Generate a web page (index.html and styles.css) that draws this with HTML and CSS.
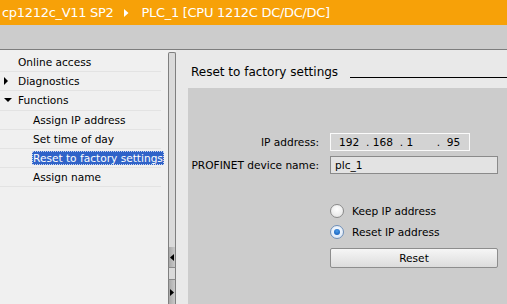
FILE: index.html
```html
<!DOCTYPE html>
<html>
<head>
<meta charset="utf-8">
<link rel="stylesheet" href="styles.css">
</head>
<body>
<div class="header">
  <span class="h1">cp1212c_V11 SP2</span>
  <svg class="crumb" width="5" height="8" viewBox="0 0 5 8"><path d="M0 0 L4.5 4 L0 8 Z" fill="#fff"/></svg>
  <span class="h2">PLC_1 [CPU 1212C DC/DC/DC]</span>
</div>
<div class="toolbar"></div>
<div class="main">
  <div class="nav">
    <div class="row"><span class="tw"></span><span class="lbl">Online access</span></div>
    <div class="row"><span class="tw"><svg width="5" height="8" viewBox="0 0 5 8"><path d="M0 0 L4 4 L0 8 Z" fill="#000"/></svg></span><span class="lbl">Diagnostics</span></div>
    <div class="row"><span class="tw"><svg width="8" height="5" viewBox="0 0 8 5"><path d="M0 0 L8 0 L4 4 Z" fill="#000"/></svg></span><span class="lbl">Functions</span></div>
    <div class="row sub"><span class="lbl">Assign IP address</span></div>
    <div class="row sub"><span class="lbl">Set time of day</span></div>
    <div class="row sub"><span class="lbl sel">Reset to factory settings</span></div>
    <div class="row sub"><span class="lbl">Assign name</span></div>
  </div>
  <div class="splitter">
    <div class="track"></div>
    <div class="sbtn"><svg width="4" height="7" viewBox="0 0 4 7"><path d="M4 0 L0 3.5 L4 7 Z" fill="#000"/></svg></div>
    <div class="sgap"></div>
    <div class="sbtn last"><svg width="4" height="7" viewBox="0 0 4 7"><path d="M0 0 L4 3.5 L0 7 Z" fill="#000"/></svg></div>
  </div>
  <div class="panel">
    <div class="title"><span>Reset to factory settings</span><span class="rule"></span></div>
    <div class="content">
      <div class="form">
        <label class="flabel">IP address:</label>
        <div class="ip">192&nbsp;&nbsp;.&nbsp;168&nbsp;&nbsp;.&nbsp;1&nbsp;&nbsp;&nbsp;&nbsp;&nbsp;&nbsp;&nbsp;.&nbsp;&nbsp;95</div>
        <label class="flabel">PROFINET device name:</label>
        <div class="name">plc_1</div>
        <div></div>
        <div class="radios">
          <div class="radio"><span class="circle"></span><span>Keep IP address</span></div>
          <div class="radio"><span class="circle on"><span class="dot"></span></span><span>Reset IP address</span></div>
          <div class="btn">Reset</div>
        </div>
      </div>
    </div>
  </div>
</div>
</body>
</html>
```
FILE: styles.css
```css
html, body {
  margin: 0;
  padding: 0;
}
body {
  width: 507px;
  height: 304px;
  overflow: hidden;
  font-family: "DejaVu Sans", sans-serif;
  font-size: 10.6px;
  color: #000;
  background: #e9e9e9;
}
.header {
  height: 25px;
  background: #f7a108;
  color: #fff;
  font-size: 13px;
  letter-spacing: -0.3px;
  display: flex;
  align-items: center;
  padding-left: 2px;
  white-space: nowrap;
}
.crumb {
  margin: 0 13px 0 10px;
}
.toolbar {
  height: 24px;
  background: #cccccc;
  border-bottom: 1px solid #7d7d7d;
}
.main {
  display: flex;
  height: 254px;
}
.nav {
  width: 168px;
  background: #f0f0f0;
  padding-top: 3px;
}
.row {
  height: 18.2px;
  border-bottom: 1px solid #e3e3e3;
  display: flex;
  align-items: center;
  margin-right: 7px;
}
.tw {
  width: 17px;
  display: flex;
  justify-content: flex-start;
  padding-left: 4px;
  box-sizing: border-box;
}
.row.sub .lbl {
  margin-left: 32px;
}
.lbl {
  padding: 1px 1px;
  white-space: nowrap;
}
.lbl.sel {
  background: #3063c8;
  color: #fff;
  outline: 1px dotted #c8d4f0;
  outline-offset: -1px;
}
.splitter {
  width: 8px;
  display: flex;
  flex-direction: column;
  padding-top: 2px;
  box-sizing: border-box;
  background: #f0f0f0;
}
.track {
  flex: 1;
  border: 1px solid #7f7f7f;
  border-bottom: none;
  border-radius: 2px 2px 0 0;
  background: #dadada;
}
.sbtn {
  height: 20px;
  border-left: 1px solid #7f7f7f;
  border-right: 1px solid #7f7f7f;
  background: linear-gradient(to right, #a9a9a9, #c9c9c9);
  display: flex;
  align-items: center;
  justify-content: center;
}
.sbtn.last {
  height: 24px;
}
.sgap {
  height: 11px;
  border-left: 1px solid #7f7f7f;
  border-right: 1px solid #7f7f7f;
  border-top: 1px solid #8a8a8a;
  border-bottom: 1px solid #8a8a8a;
  background: #dadada;
}
.panel {
  flex: 1;
  background: #e9e9e9;
  display: flex;
  flex-direction: column;
  padding-left: 12px;
}
.title {
  height: 38px;
  box-sizing: border-box;
  padding-top: 6px;
  display: flex;
  align-items: center;
  gap: 12px;
  font-size: 12px;
  padding-left: 3px;
  white-space: nowrap;
}
.rule {
  flex: 1;
  height: 1px;
  border-top: 1px solid #000;
  margin-top: 12px;
}
.content {
  flex: 1;
  background: #cccccc;
  padding-top: 45px;
}
.form {
  display: grid;
  grid-template-columns: 131px 168px;
  column-gap: 11px;
  row-gap: 5px;
  align-items: center;
}
.flabel {
  text-align: right;
  white-space: nowrap;
}
.ip {
  width: 140px;
  height: 18px;
  box-sizing: border-box;
  border: 1px solid #fafafa;
  background: #d3d3d3;
  padding-left: 8px;
  line-height: 16px;
  white-space: nowrap;
}
.name {
  height: 18px;
  box-sizing: border-box;
  border: 1px solid #8a8a8a;
  background: #e3e3e3;
  padding-left: 4px;
  line-height: 16px;
}
.radios {
  margin-top: 21px;
  display: flex;
  flex-direction: column;
}
.radio {
  display: flex;
  align-items: center;
  gap: 8px;
  height: 21px;
}
.circle {
  width: 12px;
  height: 12px;
  border-radius: 50%;
  border: 1px solid #8a8a8a;
  background: radial-gradient(circle at 50% 35%, #ffffff, #e0e0e0);
  display: flex;
  align-items: center;
  justify-content: center;
}
.circle.on {
  border-color: #6f8fb8;
  background: radial-gradient(circle at 50% 40%, #ffffff, #cfe0f5);
}
.dot {
  width: 6px;
  height: 6px;
  border-radius: 50%;
  background: radial-gradient(circle at 50% 35%, #4a9ae8, #0b55b5);
}
.btn {
  margin-top: 6px;
  height: 20px;
  box-sizing: border-box;
  border: 1px solid #8d8d8d;
  border-radius: 2px;
  background: linear-gradient(#f6f6f6, #dcdcdc);
  display: flex;
  align-items: center;
  justify-content: center;
}
```
